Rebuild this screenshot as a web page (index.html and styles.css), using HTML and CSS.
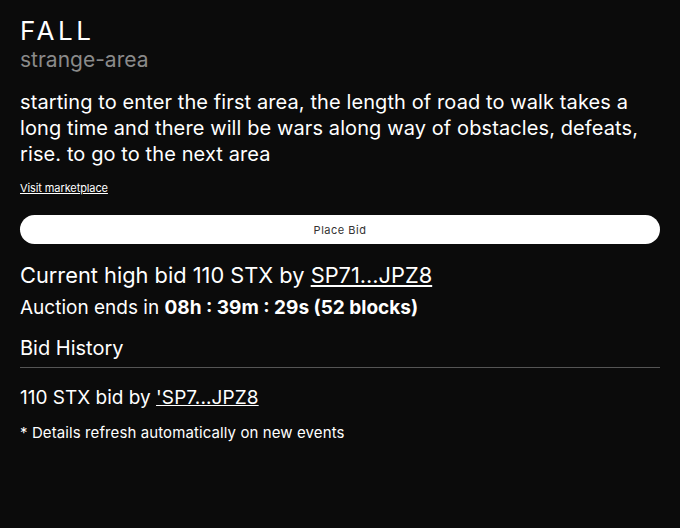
FILE: index.html
```html
<!DOCTYPE html>
<html lang="en">
<head>
  <meta charset="UTF-8" />
  <meta name="viewport" content="width=device-width, initial-scale=1.0"/>
  <title>FALL - strange-area</title>
  <link rel="stylesheet" href="styles.css">
</head>
<body>

  <main class="auction">
    <header class="item-head">
      <h1>FALL</h1>
      <p class="collection">strange-area</p>
    </header>

    <p class="description">starting to enter the first area, the length of road to walk takes a long time and there will be wars along way of obstacles, defeats, rise. to go to the next area</p>

    <a href="#" class="small-link">Visit marketplace</a>

    <button type="button" class="bid-button">Place Bid</button>

    <p class="high-bid">Current high bid 110 STX by <a href="#">SP71...JPZ8</a></p>
    <p class="ends">Auction ends in <strong>08h : 39m : 29s (52 blocks)</strong></p>

    <section class="history">
      <h2>Bid History</h2>
      <ul class="bid-list">
        <li>110 STX bid by <a href="#">'SP7...JPZ8</a></li>
      </ul>
      <p class="note">* Details refresh automatically on new events</p>
    </section>
  </main>

</body>
</html>
```

FILE: styles.css
```css
body {
  margin: 0;
  font-family: Inter, "Noto Sans", sans-serif;
  background-color: #0b0b0b;
  color: #fff;
}
a {
  color: #fff;
}
.auction {
  padding: 14px 20px;
}
.item-head h1 {
  margin: 0;
  font-size: 26px;
  font-weight: 400;
  letter-spacing: 3.5px;
  line-height: 34px;
}
.collection {
  margin: 0;
  font-size: 21px;
  color: #8a8a8a;
  line-height: 24px;
}
.description {
  margin: 17px 0 0;
  font-size: 20px;
  letter-spacing: 0.1px;
  line-height: 26px;
}
.small-link {
  display: inline-block;
  margin-top: 14px;
  font-size: 11px;
  letter-spacing: -0.1px;
}
.bid-button {
  display: block;
  width: 100%;
  margin-top: 19px;
  padding: 0;
  height: 29px;
  border: none;
  border-radius: 15px;
  background-color: #fff;
  color: #333;
  font-family: inherit;
  font-size: 11px;
  letter-spacing: 0.5px;
}
.high-bid {
  margin: 17px 0 0;
  font-size: 21.8px;
  line-height: 28px;
}
.ends {
  margin: 6px 0 0;
  font-size: 19px;
  line-height: 26px;
}
.ends strong {
  font-weight: 700;
}
.history h2 {
  margin: 13px 0 0;
  padding-bottom: 5px;
  font-size: 20px;
  font-weight: 400;
  line-height: 28px;
  border-bottom: 1px solid #555;
}
.bid-list {
  list-style: none;
  margin: 17px 0 0;
  padding: 0;
  font-size: 19px;
  line-height: 26px;
}
.bid-list a {
  letter-spacing: 0.1px;
}
.note {
  margin: 12px 0 0;
  font-size: 15px;
  line-height: 20px;
  letter-spacing: 0.1px;
}
```
